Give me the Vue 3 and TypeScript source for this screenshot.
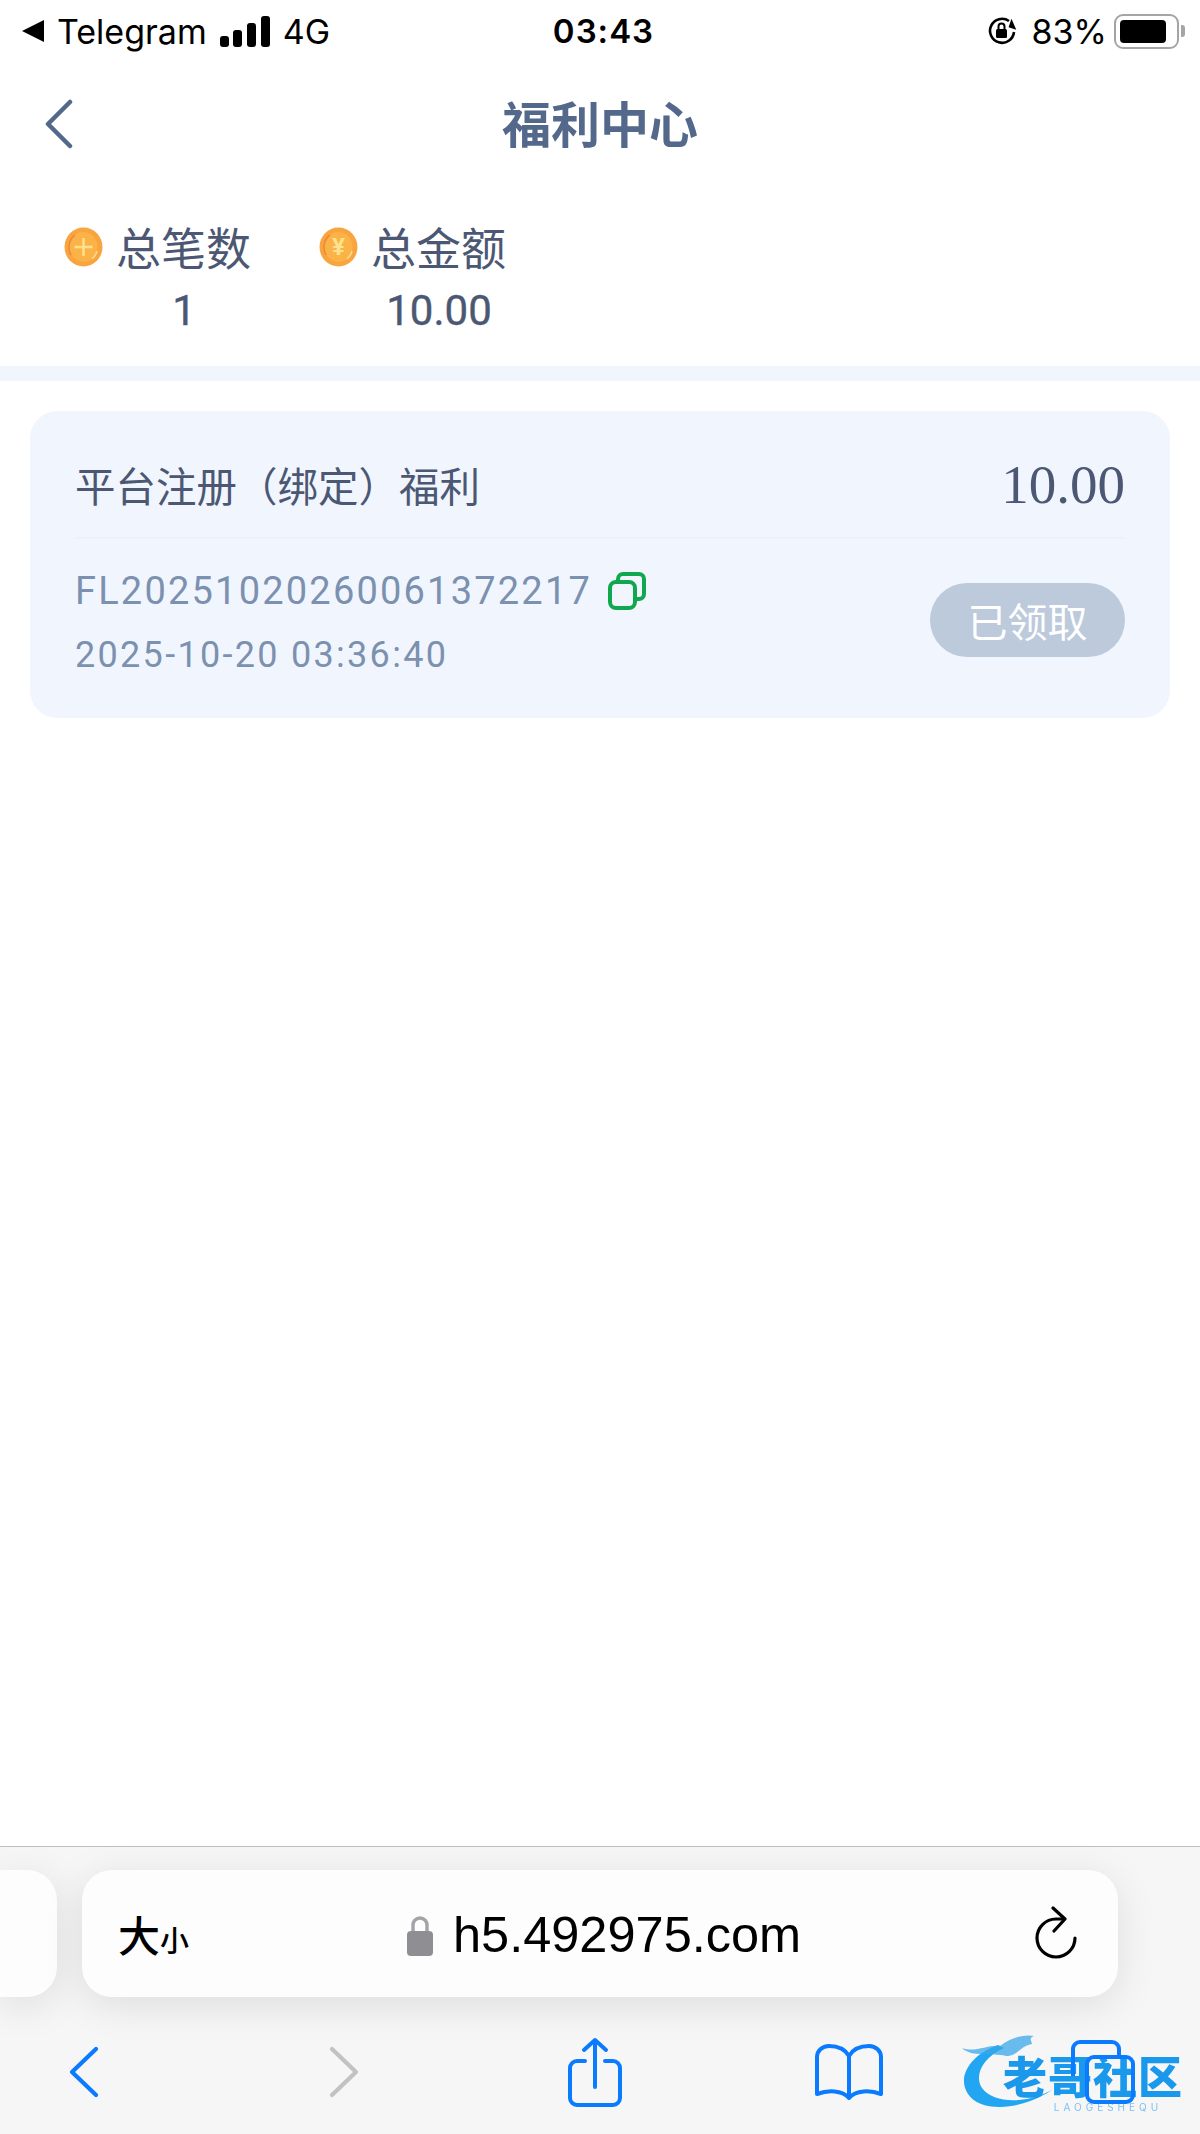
<script setup lang="ts">
const stats = [
  { id: 'count', symbol: '+', label: '总笔数', value: '1' },
  { id: 'amount', symbol: '¥', label: '总金额', value: '10.00' },
];
</script>

<template>
  <div class="page">
    <!-- iOS status bar -->
    <header class="status-bar">
      <div class="status-left">
        <svg class="back-arrow" width="22" height="22" viewBox="0 0 22 22"><path d="M0 11 L22 0 V22 Z" fill="#000" /></svg>
        <span>Telegram</span>
        <svg class="signal" width="50" height="31" viewBox="0 0 50 31">
          <rect x="0" y="20" width="9" height="11" rx="3" />
          <rect x="13" y="14" width="9" height="17" rx="3" />
          <rect x="27" y="7" width="9" height="24" rx="3" />
          <rect x="41" y="0" width="9" height="31" rx="3" />
        </svg>
        <span>4G</span>
      </div>
      <div class="status-time">03:43</div>
      <div class="status-right">
        <svg width="32" height="32" viewBox="0 0 32 32" fill="none">
          <path d="M28 17a12 12 0 1 1-5-11" stroke="#000" stroke-width="2.6" />
          <path d="M32 13l-8 1-1-9z" fill="#000" transform="rotate(25 27 10)" />
          <rect x="10" y="14" width="11" height="9" rx="1.5" fill="#000" />
          <path d="M12.5 14v-2.5a3 3 0 0 1 6 0V14" stroke="#000" stroke-width="2" />
        </svg>
        <span>83%</span>
        <div class="battery"><div class="battery-fill"></div></div>
        <div class="battery-cap"></div>
      </div>
    </header>

    <!-- page title -->
    <nav class="nav-bar">
      <svg class="nav-back" width="30" height="50" viewBox="0 0 30 50" fill="none">
        <path d="M26 3 L4 25 L26 47" stroke="#53688a" stroke-width="4.5" stroke-linecap="round" stroke-linejoin="round" />
      </svg>
      <h1>福利中心</h1>
    </nav>

    <section class="stats">
      <div v-for="item in stats" :key="item.id" class="stat">
        <div class="stat-label">
          <svg class="coin" width="39" height="40" viewBox="0 0 39 40" fill="none">
            <ellipse cx="19.5" cy="20" rx="19" ry="19.5" fill="#f9a53f" />
            <ellipse cx="19.5" cy="20" rx="14" ry="15" fill="#fbb347" />
            <path d="M7 28a14 15 0 0 1 4-20" stroke="#ee8a3c" stroke-width="1.6" />
            <path d="M33 24a14 15 0 0 1-5 8" stroke="#fdd98c" stroke-width="1.6" />
            <path v-if="item.symbol === '+'" d="M19.5 11v18M10.5 20h18" stroke="#ffe28e" stroke-width="2.4" />
            <text v-else x="19.5" y="28" text-anchor="middle" fill="#ffe28e" font-size="23" font-weight="700">{{ item.symbol }}</text>
          </svg>
          <span>{{ item.label }}</span>
        </div>
        <div class="stat-value">{{ item.value }}</div>
      </div>
    </section>

    <div class="band"></div>

    <main class="content">
      <article class="card">
        <div class="card-top">
          <span class="card-title">平台注册（绑定）福利</span>
          <span class="card-amount">10.00</span>
        </div>
        <div class="card-bottom">
          <div class="card-meta">
            <div class="order-row">
              <span>FL20251020260061372217</span>
              <svg width="38" height="38" viewBox="0 0 38 38" fill="none" stroke="#10a84f" stroke-width="4">
                <rect x="2" y="10" width="25" height="26" rx="6" />
                <path d="M10 10V7a5 5 0 0 1 5-5h16a5 5 0 0 1 5 5v15a5 5 0 0 1-5 5h-4" />
              </svg>
            </div>
            <div class="order-date">2025-10-20 03:36:40</div>
          </div>
          <button class="claimed-btn">已领取</button>
        </div>
      </article>
    </main>

    <!-- Safari bottom bar -->
    <footer class="safari">
      <div class="url-row">
        <div class="tab-peek"></div>
        <div class="url-box">
          <span class="text-size">大<small>小</small></span>
          <div class="url">
            <svg width="26" height="42" viewBox="0 0 26 42" fill="none">
              <path d="M6 19V11a7 7 0 0 1 14 0v8" stroke="#a3a3a8" stroke-width="3.4" />
              <rect y="17" width="26" height="25" rx="4" fill="#8e8e93" />
            </svg>
            <span>h5.492975.com</span>
          </div>
          <svg class="reload" width="44" height="56" viewBox="0 0 44 56" fill="none" stroke="#000" stroke-width="3.2" stroke-linecap="round" stroke-linejoin="round">
            <path d="M41 32a19 19 0 1 1-19-19h8" />
            <path d="M19 2 L31 13 L20 25" />
          </svg>
        </div>
      </div>
      <div class="toolbar">
        <div class="tool">
          <svg width="30" height="52" viewBox="0 0 30 52" fill="none" stroke="#0a7aff" stroke-width="4.2" stroke-linecap="round" stroke-linejoin="round"><path d="M27 3 L3 26 L27 49" /></svg>
        </div>
        <div class="tool forward">
          <svg width="30" height="52" viewBox="0 0 30 52" fill="none" stroke="#c2c2c4" stroke-width="4.2" stroke-linecap="round" stroke-linejoin="round"><path d="M3 3 L27 26 L3 49" /></svg>
        </div>
        <div class="tool">
          <svg width="54" height="70" viewBox="0 0 54 70" fill="none" stroke="#0a7aff" stroke-width="4" stroke-linecap="round" stroke-linejoin="round">
            <path d="M17 24H9a7 7 0 0 0-7 7v30a7 7 0 0 0 7 7h36a7 7 0 0 0 7-7V31a7 7 0 0 0-7-7h-8" />
            <path d="M27 50V3M16 13 L27 3 L38 13" />
          </svg>
        </div>
        <div class="tool">
          <svg width="68" height="56" viewBox="0 0 68 56" fill="none" stroke="#0a7aff" stroke-width="4" stroke-linecap="round" stroke-linejoin="round">
            <path d="M34 12C30 5 23 2 14 2 7 2 2 7 2 13v37c11-4 25-4 32 4 7-8 21-8 32-4V13c0-6-5-11-12-11-9 0-16 3-20 10v42" />
          </svg>
        </div>
        <div class="tool">
          <svg width="64" height="64" viewBox="0 0 64 64" fill="none" stroke="#0a7aff" stroke-width="4" stroke-linejoin="round">
            <path d="M2 36V9a7 7 0 0 1 7-7h32a7 7 0 0 1 7 7v9" />
            <rect x="16" y="17" width="46" height="45" rx="7" />
          </svg>
        </div>
      </div>

      <!-- watermark stamped over the toolbar -->
      <div class="watermark">
        <svg class="wm-logo" width="100" height="76" viewBox="0 0 100 76" fill="none">
          <path d="M38 11C12 20-4 42 8 60c12 18 50 18 84-4C66 70 34 70 22 54 14 42 22 24 44 14z" fill="#22a6f2" />
          <path d="M2 14c14 5 26-4 38-2 10-8 24-12 34-10-6 2-2 6-2 8-12 2-14 12-26 12C32 18 12 24 2 14z" fill="#3aa7ea" opacity=".75" />
        </svg>
        <div class="wm-text">
          <span class="wm-cn">老哥社区</span>
          <span class="wm-en">LAOGESHEQU</span>
        </div>
      </div>
    </footer>
  </div>
</template>

<style scoped>
.page {
  position: relative;
  display: flex;
  flex-direction: column;
  width: 1200px;
  height: 2134px;
  overflow: hidden;
  background: #fff;
  font-family: Inter, "Noto Sans CJK SC", sans-serif;
}

.status-bar {
  display: flex;
  align-items: center;
  justify-content: space-between;
  height: 62px;
  padding: 0 15px 0 22px;
  font-size: 34px;
  color: #000;
}

.status-left {
  display: flex;
  align-items: center;
  gap: 13px;
  width: 420px;
}

.status-time {
  font-weight: 600;
  font-size: 33px;
  letter-spacing: 1px;
}

.status-right {
  display: flex;
  align-items: center;
  justify-content: flex-end;
  gap: 8px;
  width: 420px;
}

.status-right span {
  margin-left: 6px;
}

.battery {
  width: 65px;
  height: 35px;
  margin-left: -1px;
  padding: 4px;
  box-sizing: border-box;
  border: 2.5px solid #a5a5a5;
  border-radius: 9px;
}

.battery-fill {
  width: 46px;
  height: 100%;
  background: #000;
  border-radius: 4px;
}

.battery-cap {
  width: 4px;
  height: 12px;
  margin-left: -6px;
  background: #a5a5a5;
  border-radius: 0 3px 3px 0;
}

.nav-bar {
  position: relative;
  display: flex;
  align-items: center;
  justify-content: center;
  height: 124px;
  padding-bottom: 6px;
  box-sizing: border-box;
}

.nav-bar h1 {
  margin: 0;
  font-size: 49px;
  font-weight: 700;
  color: #53688a;
}

.nav-back {
  position: absolute;
  left: 44px;
  top: 37px;
}

.stats {
  display: flex;
  gap: 68px;
  height: 180px;
  padding: 30px 0 0 64px;
  box-sizing: border-box;
}

.stat {
  display: flex;
  flex-direction: column;
}

.stat-label {
  display: flex;
  align-items: center;
  gap: 13px;
  height: 60px;
  font-size: 45px;
  color: #4c5873;
}

.coin {
  flex: none;
  margin-top: 2px;
}

.stat-value {
  margin-top: 10px;
  padding-left: 53px;
  font-family: Roboto, sans-serif;
  font-size: 42px;
  font-weight: 400;
  line-height: 50px;
  text-align: center;
  color: #4c5873;
  -webkit-text-stroke: 0.4px #4c5873;
}

.band {
  height: 15px;
  background: #f1f6fe;
}

.content {
  flex: 1;
  padding: 30px 30px 0;
}

.card {
  height: 307px;
  padding: 0 45px;
  box-sizing: border-box;
  background: #f1f6fe;
  border-radius: 27px;
}

.card-top {
  display: flex;
  align-items: center;
  justify-content: space-between;
  height: 128px;
  padding-top: 20px;
  box-sizing: border-box;
  border-bottom: 2px solid #edf1fa;
}

.card-title {
  font-size: 40.5px;
  color: #4c5873;
}

.card-amount {
  font-family: "Liberation Serif", serif;
  font-size: 55px;
  color: #4c5873;
}

.card-bottom {
  display: flex;
  align-items: center;
  justify-content: space-between;
  padding-top: 28px;
}

.card-meta {
  display: flex;
  flex-direction: column;
  gap: 16px;
  font-family: Roboto, sans-serif;
  color: #7b91af;
}

.order-row {
  display: flex;
  align-items: center;
  gap: 16px;
  height: 48px;
  font-size: 38px;
  letter-spacing: 2.2px;
}

.order-date {
  font-size: 36px;
  letter-spacing: 2.3px;
  line-height: 48px;
}

.claimed-btn {
  width: 195px;
  height: 74px;
  margin-top: -6px;
  padding: 0;
  font: inherit;
  font-size: 40px;
  color: #fff;
  background: #bccadc;
  border: none;
  border-radius: 37px;
}

.safari {
  position: relative;
  height: 288px;
  box-sizing: border-box;
  background: #f6f6f7;
  border-top: 1px solid #bfbfbf;
}

.url-row {
  display: flex;
  gap: 25px;
  padding-top: 23px;
}

.tab-peek,
.url-box {
  height: 127px;
  background: #fdfdfd;
  box-shadow: 0 8px 40px rgba(0, 0, 0, 0.1);
}

.tab-peek {
  width: 57px;
  border-radius: 0 30px 30px 0;
}

.url-box {
  position: relative;
  display: flex;
  align-items: center;
  width: 1036px;
  padding: 0 40px 0 36px;
  box-sizing: border-box;
  border-radius: 30px;
}

.text-size {
  font-size: 42px;
  font-weight: 500;
  color: #000;
}

.text-size small {
  font-size: 29px;
}

.url {
  position: absolute;
  left: 325px;
  top: 43px;
  display: flex;
  align-items: center;
  gap: 20px;
  font-family: "Liberation Sans", sans-serif;
  font-size: 50.5px;
  line-height: 44px;
  color: #000;
}

.reload {
  margin-left: auto;
}

.toolbar {
  position: relative;
  z-index: 1;
  display: flex;
  gap: 194px;
  padding: 35px 0 0 54px;
}

.tool {
  display: flex;
  flex: none;
  align-items: center;
  justify-content: center;
  width: 60px;
  height: 80px;
}

.tool svg {
  flex: none;
}

.tool.forward {
  margin: 0 -3px 0 6px;
}

.watermark {
  position: absolute;
  left: 960px;
  top: 187px;
  width: 225px;
  height: 76px;
  filter: blur(0.6px);
}

.wm-logo {
  display: block;
}

.wm-text {
  position: absolute;
  left: 43px;
  top: 22px;
  display: flex;
  flex-direction: column;
  align-items: center;
  white-space: nowrap;
}

.wm-cn {
  font-size: 44px;
  font-weight: 900;
  line-height: 44px;
  letter-spacing: 1px;
  color: #1a98ec;
}

.wm-en {
  margin: 1px 0 0 30px;
  font-size: 10px;
  line-height: 12px;
  letter-spacing: 4px;
  color: #7fc0ef;
}
</style>

<style>
html,
body {
  margin: 0;
  background: #fff;
}
</style>
